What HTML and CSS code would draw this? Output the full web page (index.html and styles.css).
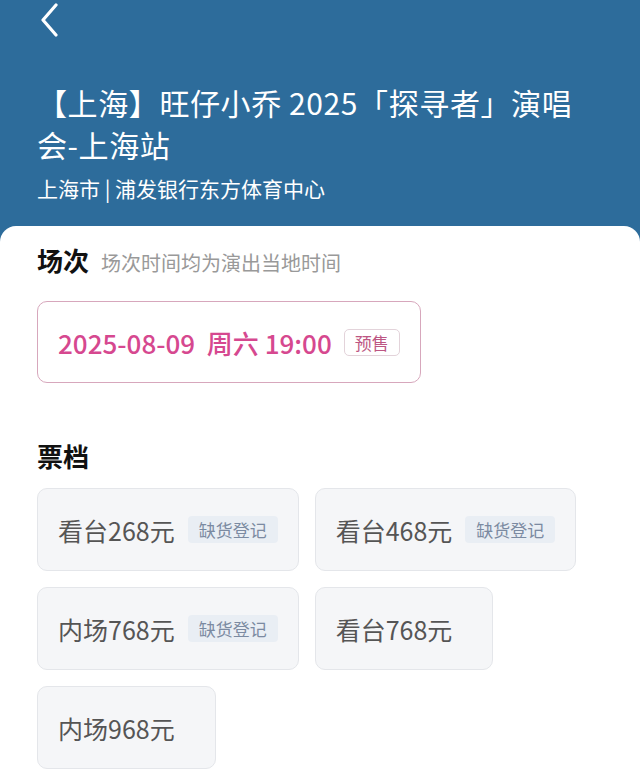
FILE: index.html
```html
<!DOCTYPE html>
<html lang="zh-CN">
<head>
    <meta charset="UTF-8">
    <meta name="viewport" content="width=device-width, initial-scale=1.0">
    <title>旺仔小乔 2025「探寻者」演唱会-上海站</title>
    <link rel="stylesheet" href="styles.css">
</head>
<body>
    <div class="header">
        <a class="back" href="#">
            <svg width="20" height="34" viewBox="0 0 20 34">
                <path d="M16 2 L3 17 L16 32" fill="none" stroke="#fff" stroke-width="3.2" stroke-linecap="round" stroke-linejoin="round"/>
            </svg>
        </a>
        <h1 class="title">【上海】旺仔小乔 2025「探寻者」演唱会-上海站</h1>
        <div class="venue">上海市 | 浦发银行东方体育中心</div>
    </div>

    <div class="panel">
        <!-- 场次 -->
        <div class="section-head">
            <h2>场次</h2>
            <span class="note">场次时间均为演出当地时间</span>
        </div>
        <div class="session">
            <span class="session-time">2025-08-09&nbsp; 周六 19:00</span>
            <span class="presale">预售</span>
        </div>

        <!-- 票档 -->
        <div class="section-head tickets-head">
            <h2>票档</h2>
        </div>
        <div class="tickets">
            <div class="ticket">看台268元 <span class="soldout">缺货登记</span></div>
            <div class="ticket">看台468元 <span class="soldout">缺货登记</span></div>
            <div class="ticket">内场768元 <span class="soldout">缺货登记</span></div>
            <div class="ticket ticket-plain">看台768元</div>
            <div class="ticket ticket-plain">内场968元</div>
        </div>
    </div>
</body>
</html>
```

FILE: styles.css
```css
body {
    margin: 0;
    background-color: #2d6c9b;
    font-family: "Noto Sans CJK SC", "Noto Sans", sans-serif;
}
.header {
    padding: 3px 37px 24px;
    color: #fff;
}
.back {
    display: block;
    width: 20px;
    height: 34px;
    margin-left: 3px;
}
.back svg {
    display: block;
}
.title {
    margin: 44px 0 0;
    max-width: 560px;
    font-size: 30px;
    font-weight: normal;
    line-height: 42px;
    letter-spacing: 0.6px;
}
.venue {
    margin-top: 9px;
    font-size: 21px;
    line-height: 28px;
}
.panel {
    background-color: #fff;
    border-radius: 16px 16px 0 0;
    padding: 17px 37px 0;
    min-height: 560px;
}
.section-head {
    display: flex;
    align-items: baseline;
    height: 34px;
}
.section-head h2 {
    margin: 0;
    font-size: 26px;
    line-height: 34px;
    font-weight: bold;
    color: #111;
}
.note {
    margin-left: 12px;
    font-size: 20px;
    color: #999;
}
.session {
    display: inline-flex;
    align-items: center;
    gap: 12px;
    height: 80px;
    margin-top: 24px;
    padding: 0 20px;
    border: 1px solid #d7a7bc;
    border-radius: 10px;
}
.session-time {
    font-size: 26px;
    font-weight: 500;
    color: #d6488f;
}
.presale {
    display: inline-block;
    height: 25px;
    line-height: 25px;
    padding: 0 10px;
    border: 1px solid #e3d3da;
    border-radius: 5px;
    font-size: 17px;
    color: #bd5683;
}
.tickets-head {
    margin-top: 56px;
}
.tickets {
    display: flex;
    flex-wrap: wrap;
    gap: 16px;
    margin-top: 15px;
    max-width: 560px;
}
.ticket {
    display: flex;
    align-items: center;
    gap: 13px;
    height: 81px;
    padding: 0 20px;
    background-color: #f5f6f8;
    border: 1px solid #e4e6ea;
    border-radius: 10px;
    font-size: 25px;
    color: #555;
}
.ticket-plain {
    padding-right: 40px;
}
.soldout {
    display: inline-block;
    height: 27px;
    line-height: 27px;
    padding: 0 11px;
    background-color: #e9eef4;
    border-radius: 4px;
    font-size: 17px;
    color: #7b8aa1;
}
```
